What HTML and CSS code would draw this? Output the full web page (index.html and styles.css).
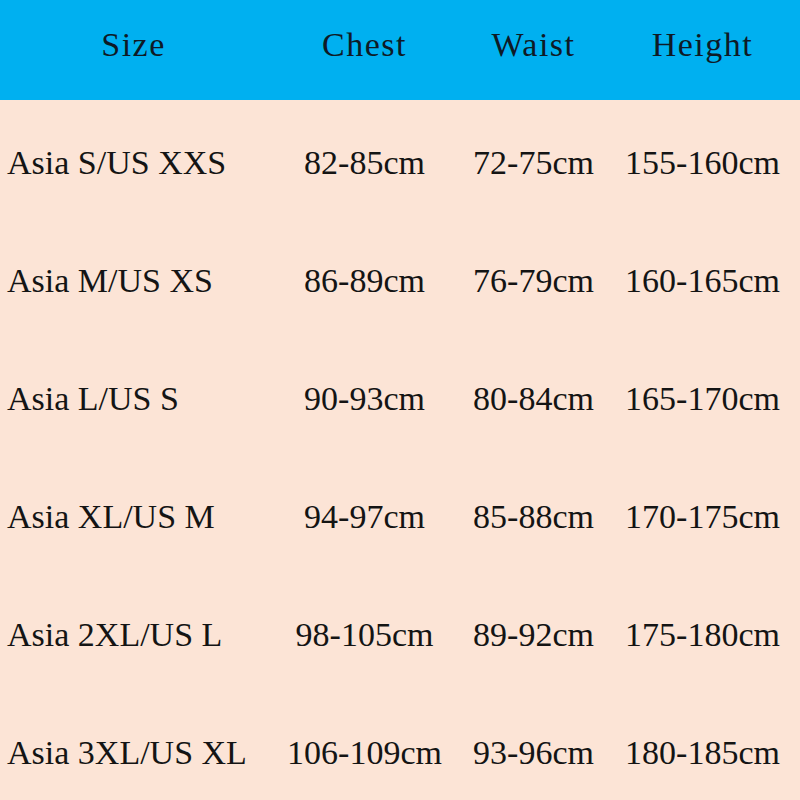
FILE: index.html
```html
<!DOCTYPE html>
<html lang="en">
<head>
<meta charset="utf-8">
<title>Size chart</title>
<link rel="stylesheet" href="styles.css">
</head>
<body>
<div class="chart">
  <div class="row head">
    <div class="cell first">Size</div>
    <div class="cell">Chest</div>
    <div class="cell">Waist</div>
    <div class="cell">Height</div>
  </div>
  <div class="row">
    <div class="cell first">Asia S/US XXS</div>
    <div class="cell">82-85cm</div>
    <div class="cell">72-75cm</div>
    <div class="cell">155-160cm</div>
  </div>
  <div class="row">
    <div class="cell first">Asia M/US XS</div>
    <div class="cell">86-89cm</div>
    <div class="cell">76-79cm</div>
    <div class="cell">160-165cm</div>
  </div>
  <div class="row">
    <div class="cell first">Asia L/US S</div>
    <div class="cell">90-93cm</div>
    <div class="cell">80-84cm</div>
    <div class="cell">165-170cm</div>
  </div>
  <div class="row">
    <div class="cell first">Asia XL/US M</div>
    <div class="cell">94-97cm</div>
    <div class="cell">85-88cm</div>
    <div class="cell">170-175cm</div>
  </div>
  <div class="row">
    <div class="cell first">Asia 2XL/US L</div>
    <div class="cell">98-105cm</div>
    <div class="cell">89-92cm</div>
    <div class="cell">175-180cm</div>
  </div>
  <div class="row">
    <div class="cell first">Asia 3XL/US XL</div>
    <div class="cell">106-109cm</div>
    <div class="cell">93-96cm</div>
    <div class="cell">180-185cm</div>
  </div>
</div>
</body>
</html>
```

FILE: styles.css
```css
html, body {
  margin: 0;
  padding: 0;
  background: #fce4d6;
}
body {
  width: 800px;
  height: 800px;
  overflow: hidden;
  font-family: "Liberation Serif", "Times New Roman", serif;
  font-size: 34px;
  line-height: 1;
  color: #141414;
}
.chart {
  display: flex;
  flex-direction: column;
}
.row {
  display: grid;
  grid-template-columns: 267px 195px 143px 195px;
  align-items: center;
  height: 118px;
  padding-top: 7px;
  box-sizing: border-box;
}
.row.head {
  height: 100px;
  padding-top: 0;
  padding-bottom: 10px;
  background: #00b0f0;
  color: #0e1a26;
  letter-spacing: 1.5px;
}
.cell {
  text-align: center;
  white-space: nowrap;
}
.row .cell.first {
  text-align: left;
  padding-left: 7px;
}
.row.head .cell.first {
  text-align: center;
  padding-left: 0;
}
```
